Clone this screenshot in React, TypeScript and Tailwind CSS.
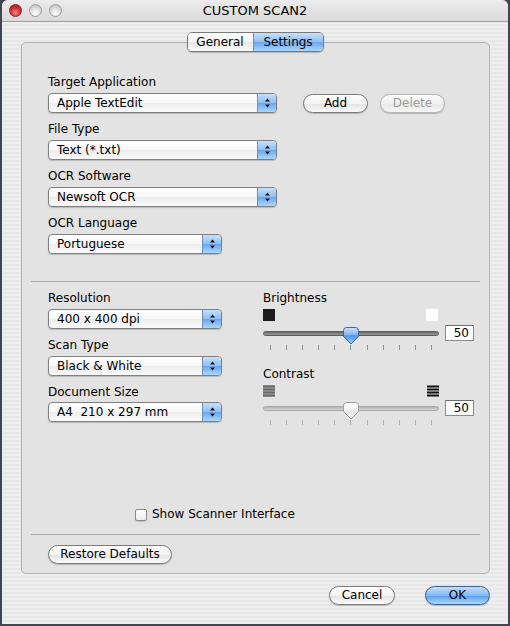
import React from 'react';

const font = "font-['Lucida_Grande','DejaVu_Sans',sans-serif]";

function Arrows() {
  return (
    <svg width="7" height="12" viewBox="0 0 7 12">
      <path d="M3.5 1.5 L6 4.5 H1 Z" fill="#111" />
      <path d="M3.5 10.5 L6 7.5 H1 Z" fill="#111" />
    </svg>
  );
}

function PopUp({ value, width }: { value: string; width: string }) {
  return (
    <div
      className={`${width} h-[20px] flex rounded-[4px] border border-[#7f7f7f] shadow-[0_1px_1px_rgba(0,0,0,0.18)] overflow-hidden bg-[linear-gradient(#ffffff,#f7f7f7_50%,#ededed_51%,#fbfbfb)]`}
    >
      <div className="flex-1 pl-[8px] text-[12px] leading-[18px] text-black whitespace-pre">{value}</div>
      <div className="w-[19px] border-l border-[#6d8fc0] bg-[linear-gradient(#c6e0fb,#8fbef2_50%,#6aa6ee_51%,#aad6fc)] flex items-center justify-center">
        <Arrows />
      </div>
    </div>
  );
}

function AquaButton({
  label,
  width,
  disabled,
  primary,
}: {
  label: string;
  width: string;
  disabled?: boolean;
  primary?: boolean;
}) {
  const look = primary
    ? 'border-[#3f5f8c] bg-[linear-gradient(#c2defb,#84b9f3_50%,#5b9eed_51%,#a8dafd)] text-black'
    : disabled
      ? 'border-[#b4b4b4] bg-[linear-gradient(#fbfbfb,#f0f0f0_50%,#e8e8e8_51%,#f6f6f6)] text-[#9c9c9c]'
      : 'border-[#7a7a7a] bg-[linear-gradient(#ffffff,#f3f3f3_50%,#e3e3e3_51%,#fbfbfb)] text-black';
  return (
    <button
      className={`${width} h-[19px] rounded-full border ${look} shadow-[0_1px_1px_rgba(0,0,0,0.2)] text-[12px] leading-[17px] text-center`}
    >
      {label}
    </button>
  );
}

function Label({ text }: { text: string }) {
  return <div className="h-[15px] text-[12px] leading-[15px] text-black">{text}</div>;
}

function Thumb({ active }: { active: boolean }) {
  return (
    <svg width="16" height="18" viewBox="0 0 16 18">
      <defs>
        <linearGradient id="tb" x1="0" y1="0" x2="0" y2="1">
          <stop offset="0" stopColor="#c9e2fb" />
          <stop offset="0.45" stopColor="#7fb5f1" />
          <stop offset="0.5" stopColor="#4f95e9" />
          <stop offset="1" stopColor="#9dd0fb" />
        </linearGradient>
        <linearGradient id="tg" x1="0" y1="0" x2="0" y2="1">
          <stop offset="0" stopColor="#ffffff" />
          <stop offset="0.5" stopColor="#f0f0f0" />
          <stop offset="0.51" stopColor="#e2e2e2" />
          <stop offset="1" stopColor="#f7f7f7" />
        </linearGradient>
      </defs>
      <path
        d="M3.5 0.5 H12.5 Q15.5 0.5 15.5 3.5 V9.5 L8 17 L0.5 9.5 V3.5 Q0.5 0.5 3.5 0.5 Z"
        fill={active ? 'url(#tb)' : 'url(#tg)'}
        stroke={active ? '#44648f' : '#9c9c9c'}
      />
    </svg>
  );
}

function Ticks({ light }: { light?: boolean }) {
  return (
    <div className="w-[176px] px-[7px] flex justify-between h-[5px]">
      {Array.from({ length: 11 }).map((_, i) => (
        <div key={i} className={`w-px h-[5px] ${light ? 'bg-[#aeaeae]' : 'bg-[#8e8e8e]'}`} />
      ))}
    </div>
  );
}

function Slider({ active }: { active: boolean }) {
  return (
    <div className="flex h-[16px]">
      <div className="relative w-[176px] h-[16px]">
        <div
          className={`mt-[6px] h-[5px] rounded-full border ${
            active
              ? 'border-[#5c5c5c] bg-[linear-gradient(#6a6a6a,#9a9a9a)]'
              : 'border-[#a8a8a8] bg-[linear-gradient(#b4b4b4,#d4d4d4)]'
          }`}
        />
        <div className="absolute left-[80px] top-[2px]">
          <Thumb active={active} />
        </div>
      </div>
      <div className="ml-[6px] w-[29px] h-[16px] bg-white border border-[#8c8c8c] border-t-[#6c6c6c] text-[12px] leading-[14px] text-right pr-[4px]">
        50
      </div>
    </div>
  );
}

function Stripes({ high }: { high: boolean }) {
  return (
    <svg width="12" height="12" viewBox="0 0 12 12">
      {!high && <rect x="0" y="0" width="12" height="12" fill="#a4a4a4" />}
      {[0, 3, 6, 9].map((y) => (
        <rect key={y} x="0" y={y + 0.5} width="12" height="2" fill={high ? '#111' : '#6a6a6a'} />
      ))}
    </svg>
  );
}

function Light({ red }: { red?: boolean }) {
  return (
    <div
      className={`w-[13px] h-[13px] rounded-full border ${
        red
          ? 'border-[#8a1f1f] bg-[radial-gradient(circle_at_50%_70%,#f08a8a,#d43a3a_45%,#9b1414)]'
          : 'border-[#9a9a9a] bg-[radial-gradient(circle_at_50%_75%,#ffffff,#dedede_50%,#b8b8b8)]'
      }`}
    />
  );
}

export default function App() {
  return (
    <div className={`w-[510px] h-[626px] bg-[#3f4552] ${font}`}>
      <div className="mx-[2px] h-[624px] rounded-t-[6px] overflow-hidden flex flex-col bg-[repeating-linear-gradient(0deg,#eeeeee_0px,#eeeeee_2px,#e7e7e7_2px,#e7e7e7_4px)]">
        {/* title bar */}
        <div className="h-[22px] shrink-0 flex items-center pl-[7px] border-b border-[#9d9d9d] bg-[linear-gradient(#ececec,#dadada)] relative">
          <div className="flex gap-[7px]">
            <Light red />
            <Light />
            <Light />
          </div>
          <div className="absolute inset-0 flex items-center justify-center text-[13px] text-black">
            CUSTOM SCAN2
          </div>
        </div>

        {/* tabs */}
        <div className="mt-[10px] flex justify-center relative z-10 -mb-[10px]">
          <div className="flex h-[20px] rounded-[5px] border border-[#787878] overflow-hidden shadow-[0_1px_1px_rgba(0,0,0,0.2)] text-[12px] leading-[18px]">
            <div className="w-[66px] text-center bg-[linear-gradient(#ffffff,#f4f4f4_50%,#e6e6e6_51%,#fbfbfb)] border-r border-[#8a8a8a]">
              General
            </div>
            <div className="w-[69px] text-center bg-[linear-gradient(#c6e0fb,#8fbef2_50%,#6aa6ee_51%,#aad6fc)]">
              Settings
            </div>
          </div>
        </div>

        {/* panel */}
        <div className="ml-[19px] mr-[18px] rounded-[5px] border border-[#b2b2b2] bg-[#e3e3e3] pt-[32px] pb-[9px]">
          <div className="pl-[26px]">
            <Label text="Target Application" />
            <div className="mt-[3px] flex items-center">
              <PopUp value="Apple TextEdit" width="w-[229px]" />
              <div className="ml-[26px] flex gap-[12px]">
                <AquaButton label="Add" width="w-[65px]" />
                <AquaButton label="Delete" width="w-[65px]" disabled />
              </div>
            </div>
            <div className="mt-[9px]">
              <Label text="File Type" />
            </div>
            <div className="mt-[3px]">
              <PopUp value="Text (*.txt)" width="w-[229px]" />
            </div>
            <div className="mt-[9px]">
              <Label text="OCR Software" />
            </div>
            <div className="mt-[3px]">
              <PopUp value="Newsoft OCR" width="w-[229px]" />
            </div>
            <div className="mt-[9px]">
              <Label text="OCR Language" />
            </div>
            <div className="mt-[3px]">
              <PopUp value="Portuguese" width="w-[174px]" />
            </div>
          </div>

          <div className="mx-[9px] mt-[27px] h-px bg-[#a9a9a9]" />

          <div className="pl-[26px] mt-[9px] flex gap-[41px]">
            <div>
              <Label text="Resolution" />
              <div className="mt-[3px]">
                <PopUp value="400 x 400 dpi" width="w-[174px]" />
              </div>
              <div className="mt-[9px]">
                <Label text="Scan Type" />
              </div>
              <div className="mt-[3px]">
                <PopUp value="Black &amp; White" width="w-[174px]" />
              </div>
              <div className="mt-[9px]">
                <Label text="Document Size" />
              </div>
              <div className="mt-[2px]">
                <PopUp value="A4  210 x 297 mm" width="w-[174px]" />
              </div>
            </div>

            <div>
              <Label text="Brightness" />
              <div className="mt-[3px] w-[175px] flex justify-between">
                <div className="w-[12px] h-[12px] bg-[#1d1d1f]" />
                <div className="w-[12px] h-[12px] bg-white" />
              </div>
              <div className="mt-[4px]">
                <Slider active />
              </div>
              <div className="mt-[4px]">
                <Ticks />
              </div>
              <div className="mt-[17px]">
                <Label text="Contrast" />
              </div>
              <div className="mt-[3px] w-[176px] flex justify-between">
                <Stripes high={false} />
                <Stripes high />
              </div>
              <div className="mt-[3px]">
                <Slider active={false} />
              </div>
              <div className="mt-[4px]">
                <Ticks light />
              </div>
            </div>
          </div>

          <div className="pl-[113px] mt-[82px] h-[15px] flex items-center gap-[5px]">
            <div className="w-[12px] h-[12px] rounded-[2px] border border-[#8a8a8a] bg-[linear-gradient(#ffffff,#ececec)] shadow-[0_1px_1px_rgba(0,0,0,0.15)]" />
            <span className="text-[12px] leading-[15px]">Show Scanner Interface</span>
          </div>

          <div className="mx-[9px] mt-[12px] h-px bg-[#a9a9a9]" />

          <div className="pl-[26px] mt-[10px] flex">
            <AquaButton label="Restore Defaults" width="w-[124px]" />
          </div>
        </div>

        {/* dialog buttons */}
        <div className="mt-[12px] pr-[18px] flex justify-end gap-[30px]">
          <AquaButton label="Cancel" width="w-[66px]" />
          <AquaButton label="OK" width="w-[65px]" primary />
        </div>
      </div>
    </div>
  );
}
